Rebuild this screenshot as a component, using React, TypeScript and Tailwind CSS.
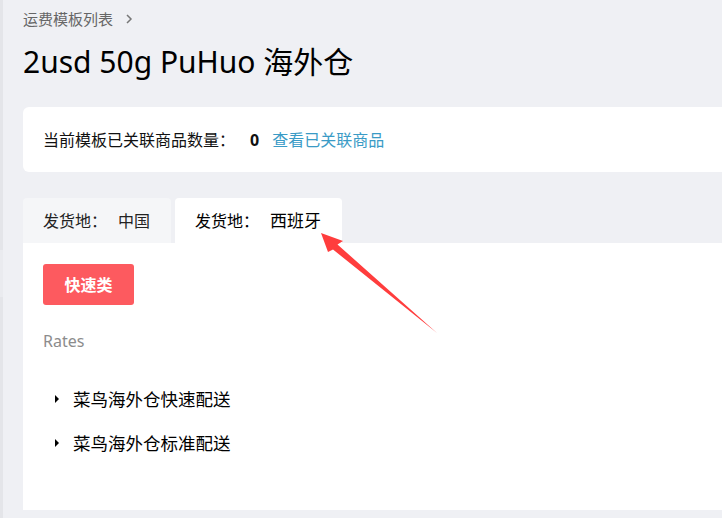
import React from 'react';

const font = { fontFamily: '"Noto Sans", "Noto Sans CJK SC", sans-serif' };

const Arrow = () => (
  <svg className="absolute left-0 top-0 pointer-events-none" width="722" height="518">
    <polygon
      points="321,233 343,241 337.5,244.5 437,333 333,249.5 328,252"
      fill="#ff3d3d"
    />
  </svg>
);

const App = () => {
  const rates = ['菜鸟海外仓快速配送', '菜鸟海外仓标准配送'];

  return (
    <div className="relative flex w-[722px] h-[518px] overflow-hidden bg-[#eff0f4] text-[#111]" style={font}>
      {/* left edge of sidebar */}
      <div className="w-[3px] shrink-0 bg-[#e4e5e9] pt-[250px]">
        <div className="h-[47px] bg-[#eaebef]" />
      </div>

      <div className="flex-1 pl-[20px] pt-[9px]">
        <div className="flex items-center gap-[12px] text-[15px] leading-[20px] text-[#666]">
          <span>运费模板列表</span>
          <svg width="8" height="12" viewBox="0 0 8 12" fill="none" stroke="#777" strokeWidth="1.5">
            <path d="M2 2l4 4-4 4" />
          </svg>
        </div>

        <h1 className="mt-[13px] text-[30px] leading-[40px] font-normal text-black">2usd 50g PuHuo 海外仓</h1>

        <div className="mt-[25px] h-[65px] bg-white rounded-l-[6px] flex items-center pl-[20px] text-[16px]">
          <span>当前模板已关联商品数量：</span>
          <span className="ml-[15px] font-bold">0</span>
          <span className="ml-[13px] text-[#3a9bc6]">查看已关联商品</span>
        </div>

        <div className="mt-[26px] flex gap-[4px] text-[16px]">
          <div className="w-[148px] h-[45px] pl-[20px] flex items-center bg-[#f5f6f8] rounded-t-[4px] text-[#222]">
            <span>发货地：</span>
            <span className="ml-[11px]">中国</span>
          </div>
          <div className="w-[167px] h-[45px] pl-[20px] flex items-center bg-white rounded-t-[4px] text-black">
            <span>发货地：</span>
            <span className="ml-[11px] text-[17px]">西班牙</span>
          </div>
        </div>

        <div className="h-[267px] bg-white pl-[20px] pt-[21px]">
          <button className="w-[91px] h-[41px] rounded-[3px] bg-[#fd5a5f] text-white font-bold text-[16px]">
            快速类
          </button>
          <div className="mt-[25px] text-[16px] leading-[22px] text-[#8c8c8c]">Rates</div>
          <div className="mt-[36px] flex flex-col gap-[22px]">
            {rates.map((r) => (
              <div key={r} className="flex items-center h-[22px] text-[17.5px] text-black">
                <span className="ml-[12px] w-0 h-0 border-y-[4px] border-y-transparent border-l-[4px] border-l-black" />
                <span className="ml-[14px]">{r}</span>
              </div>
            ))}
          </div>
        </div>
      </div>

      <Arrow />
    </div>
  );
};

export default App;
